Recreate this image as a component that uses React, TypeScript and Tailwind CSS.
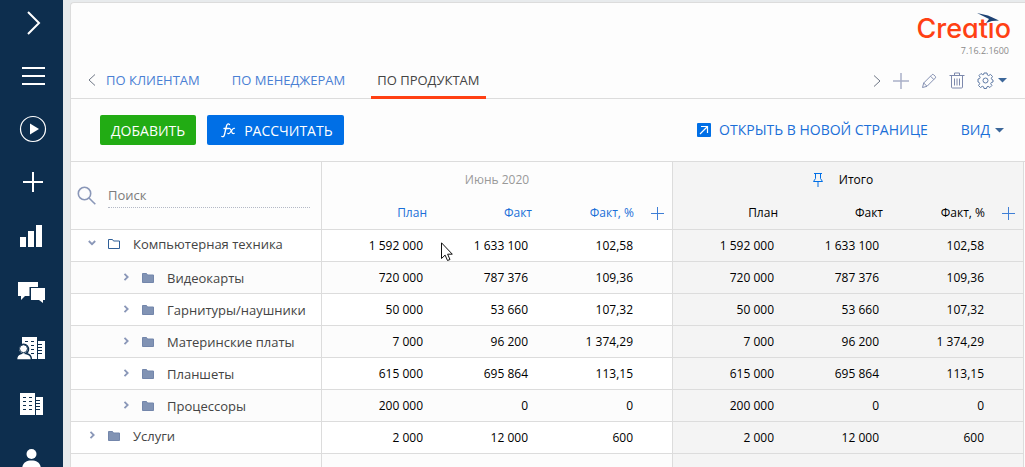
import React from "react";

type Row = { name: string; level: number; open?: boolean; values: string[] };
type NavItem = { label: string; icon: React.ReactNode };

const rows: Row[] = [
  { name: "Компьютерная техника", level: 0, open: true, values: ["1 592 000", "1 633 100", "102,58"] },
  { name: "Видеокарты", level: 1, values: ["720 000", "787 376", "109,36"] },
  { name: "Гарнитуры/наушники", level: 1, values: ["50 000", "53 660", "107,32"] },
  { name: "Материнские платы", level: 1, values: ["7 000", "96 200", "1 374,29"] },
  { name: "Планшеты", level: 1, values: ["615 000", "695 864", "113,15"] },
  { name: "Процессоры", level: 1, values: ["200 000", "0", "0"] },
  { name: "Услуги", level: 0, values: ["2 000", "12 000", "600"] },
];

const actions: NavItem[] = [
  {
    label: "Развернуть панель",
    icon: <path d="M11 5l11 11-11 11" fill="none" stroke="#fff" strokeWidth="2" />,
  },
  {
    label: "Меню",
    icon: <path d="M5 8h23M5 16h23M5 24h23" fill="none" stroke="#fff" strokeWidth="2" />,
  },
  {
    label: "Запустить процесс",
    icon: (
      <>
        <circle cx="16" cy="16" r="12.5" fill="none" stroke="#fff" strokeWidth="1.2" />
        <path d="M13 10.500l9 5.500-9 5.500z" fill="#fff" />
      </>
    ),
  },
  {
    label: "Создать",
    icon: <path d="M6 16h20M16 6v20" fill="none" stroke="#fff" strokeWidth="2" />,
  },
];

const sections: NavItem[] = [
  {
    label: "Аналитика",
    icon: <path d="M3 17h6v10H3zM11 11h6v16h-6zM19 5h6v22h-6z" fill="#fff" />,
  },
  {
    label: "Лента",
    icon: <path d="M1 6h20v5h-8.500v9H8l-4 4v-4H1zM14 12h14v12h-2v3l-4-3h-8z" fill="#fff" />,
  },
  {
    label: "Контакты компаний",
    icon: (
      <>
        <path d="M5 5h15v22H5zM21 9h7v18h-7z" fill="#fff" />
        <path
          d="M8 9.500h3M14 9.500h3M14 13.500h3M14 17.500h3M14 21.500h3M21 12.500h4M21 15.500h4M21 18.500h4M21 21.500h4"
          stroke="#0d2e4e"
        />
        <path
          d="M-.5 28c0-4 2-6 4.500-6.500a5 5 0 1 1 5 0c3 .5 5.500 2.500 5.500 6.500z"
          fill="#fff"
          stroke="#0d2e4e"
          strokeWidth="1.500"
        />
        <circle cx="6.500" cy="16.700" r="4" fill="#fff" stroke="#0d2e4e" />
      </>
    ),
  },
  {
    label: "Контрагенты",
    icon: (
      <>
        <path d="M3 5h15v22H3zM19 9h7v18h-7z" fill="#fff" />
        <path
          d="M6 9.500h3M12 9.500h3M6 13.500h3M12 13.500h3M6 17.500h3M12 17.500h3M6 21.500h3M12 21.500h3M19 12.500h4M19 15.500h4M19 18.500h4M19 21.500h4"
          stroke="#0d2e4e"
        />
      </>
    ),
  },
  {
    label: "Контакты",
    icon: (
      <>
        <circle cx="14.500" cy="10" r="5" fill="#fff" />
        <path d="M5 26c0-7 4-9.500 9.500-9.500S24 19 24 26z" fill="#fff" />
      </>
    ),
  },
];

function NavButton({ item }: { item: NavItem }) {
  return (
    <button aria-label={item.label} className="block h-[31px] shrink-0">
      <svg width="32" height="32" viewBox="0 0 32 32" overflow="visible">
        {item.icon}
      </svg>
    </button>
  );
}

function Sidebar() {
  return (
    <nav aria-label="Разделы" className="flex w-[63px] shrink-0 flex-col items-center gap-[23px] bg-[#0d2e4e] pt-[7px] pl-[3px]">
      <div className="flex flex-col gap-[22px]">
        {actions.map((item) => (
          <NavButton key={item.label} item={item} />
        ))}
      </div>
      <div className="flex flex-col gap-[25px]">
        {sections.map((item) => (
          <NavButton key={item.label} item={item} />
        ))}
      </div>
    </nav>
  );
}

function Logo() {
  return (
    <div className="relative pt-2.5 text-right">
      <div className="font-['Inter'] text-[27px] leading-8 font-medium text-[#ff4013] [font-feature-settings:'cv11']">
        Creatio
      </div>
      <svg className="absolute top-2.5 right-3 h-[10px] w-[22px]" viewBox="0 0 22 10">
        <path d="M0 0l11 2.500L22 7.500 15 8l-6 2 3-4z" fill="#1d4374" />
      </svg>
      <div className="pr-0.5 text-[9px] leading-3 text-[#8a8a8a]">7.16.2.1600</div>
    </div>
  );
}

function Caret() {
  return (
    <svg width="9" height="5" viewBox="0 0 9 5">
      <path d="M0 0h9L4.500 4.500z" fill="#3c679a" />
    </svg>
  );
}

function Tabs() {
  const tab = "h-[38px] border-b-[3px] px-1.5 pt-1 text-[13px]";
  return (
    <div className="flex h-[38px] shrink-0 items-center border-b border-[#dcdcdc] pr-[18px] pl-4">
      <button aria-label="Предыдущие вкладки" className="mr-1">
        <svg width="9" height="14" viewBox="0 0 9 14" fill="none" stroke="#6f7786">
          <path d="M8 1.500L2 7l6 5.500" />
        </svg>
      </button>
      <div role="tablist" className="-mb-px flex gap-5 self-start">
        <button role="tab" aria-selected={false} className={`${tab} border-transparent text-[#4a80d4]`}>
          ПО КЛИЕНТАМ
        </button>
        <button role="tab" aria-selected={false} className={`${tab} border-transparent text-[#4a80d4]`}>
          ПО МЕНЕДЖЕРАМ
        </button>
        <button role="tab" aria-selected className={`${tab} border-[#ff4013] text-[#444]`}>
          ПО ПРОДУКТАМ
        </button>
      </div>
      <div className="ml-auto flex items-center gap-3 pt-0.5">
        <button aria-label="Следующие вкладки">
          <svg width="9" height="14" viewBox="0 0 9 14" fill="none" stroke="#6f7786">
            <path d="M2 1.500l6 5.500-6 5.500" />
          </svg>
        </button>
        <button aria-label="Добавить вкладку">
          <svg width="16" height="16" viewBox="0 0 16 16" stroke="#a9b0c8" strokeWidth="1.500">
            <path d="M0 8h16M8 0v16" />
          </svg>
        </button>
        <button aria-label="Изменить">
          <svg width="16" height="16" viewBox="0 0 16 16" fill="none" stroke="#8490b2">
            <path d="M1.500 14.500l1.200-4.500L11 1.700q.8-.7 1.600 0l1.700 1.700q.7.8 0 1.600L6 13.300zM9.500 3.200l3.300 3.300M2.700 10l3.300 3.300" />
          </svg>
        </button>
        <button aria-label="Удалить">
          <svg width="16" height="17" viewBox="0 0 16 17" fill="none" stroke="#7c88ac">
            <path d="M.5 3.500h15M5.500 3V1h5v2M2.500 4v11q0 1 1 1h9q1 0 1-1V4M5.500 6.500v7M8 6.500v7M10.500 6.500v7" />
          </svg>
        </button>
        <button aria-label="Настройки" className="flex items-center gap-1">
          <svg width="17" height="17" viewBox="0 0 17 17" fill="none" stroke="#5f7aa5">
            <path
              strokeLinejoin="round"
              d="M7 1h3l.4 2 1.300.600 1.800-1.200 2 2.100-1.200 1.800.5 1.200L16 8v2l-1.700.5-.6 1.200 1.200 1.800-2 2-1.800-1.200-1.200.6-.4 1.600H7l-.4-1.700-1.300-.5-1.800 1.200-2-2 1.200-1.800-.6-1.300L1 10V7l1.600-.4.6-1.300L2 3.500l2-2 1.700 1.200L6.600 2.600z"
            />
            <circle cx="8.500" cy="8.500" r="2.500" />
          </svg>
          <Caret />
        </button>
      </div>
    </div>
  );
}

function Toolbar() {
  return (
    <div className="flex h-[63px] shrink-0 items-center gap-[11px] border-b border-[#dcdcdc] pr-[21px] pl-[29px] text-sm">
      <button className="h-[30px] rounded-xs bg-[#22ac14] px-[11px] pt-0.5 text-white">ДОБАВИТЬ</button>
      <button className="flex h-[30px] items-center gap-2 rounded-xs bg-[#006fe6] px-[11px] pt-0.5 text-white">
        <span aria-hidden="true" className="flex w-[18px] justify-end pb-0.5">
          <svg width="15" height="15" viewBox="0 0 15 15" fill="none" stroke="#fff" strokeLinecap="round">
            <path d="M8.500 1.500Q6.500-.3 5.500 3L3.500 11.500Q2.800 14.300.8 13.500M3 5.500h4.500" strokeWidth="1.300" />
            <path d="M7.500 5.500q1.500-.6 2.200 1l1.300 3q.7 1.700 2.300.8M13.500 5.300q-1-.3-2 1L8.800 9.800q-1 1.200-2 .7" strokeWidth="1.200" />
          </svg>
        </span>
        РАССЧИТАТЬ
      </button>
      <a href="#page" className="ml-auto flex items-center gap-2 text-[#1b6fd8]">
        <svg width="14" height="14" viewBox="0 0 14 14">
          <rect width="14" height="14" rx="1" fill="#006fe6" />
          <path d="M3 11l7.500-7.500M4 3.500h6.500V10" stroke="#fff" fill="none" strokeWidth="1.200" />
        </svg>
        ОТКРЫТЬ В НОВОЙ СТРАНИЦЕ
      </a>
      <button className="ml-[22px] flex items-center gap-[5px] text-[#1b6fd8]">
        ВИД
        <Caret />
      </button>
    </div>
  );
}

function AddColumn() {
  return (
    <button aria-label="Добавить колонку" className="block">
      <svg width="13" height="13" viewBox="0 0 13 13" stroke="#3f7fd6">
        <path d="M0 6.500h13M6.500 0v13" />
      </svg>
    </button>
  );
}

function Folder({ open }: { open?: boolean }) {
  return (
    <svg width="12" height="10" viewBox="0 0 12 10">
      <path
        d="M.5.500h4l1 1.500h6v7.500H.5z"
        fill={open ? "#fff" : "#8193b4"}
        stroke={open ? "#2f5f98" : "#7386ab"}
      />
    </svg>
  );
}

function Chevron({ open }: { open?: boolean }) {
  return (
    <svg width="8" height="8" viewBox="0 0 8 8" fill="none" stroke="#8a97b8" strokeWidth="1.800">
      <path d={open ? "M.8 2L4 5.200 7.200 2" : "M2.500 .8L5.700 4 2.500 7.200"} />
    </svg>
  );
}

const line = "border-b border-[#dcdcdc]";
const edge = "border-r border-[#dcdcdc]";

function SubHeaders({ total }: { total?: boolean }) {
  const tone = total ? "bg-[#f4f4f4] font-medium text-black" : "font-normal text-[#1b6fd8]";
  return (
    <>
      <th scope="col" className={`${line} ${tone} pr-[5px] text-right`}>План</th>
      <th scope="col" className={`${line} ${tone} pr-[5px] text-right`}>Факт</th>
      <th scope="col" className={`${line} ${tone} pr-2 text-right`}>Факт, %</th>
      <td className={`${line} ${edge} ${tone} pl-[9px]`}>
        <AddColumn />
      </td>
    </>
  );
}

function ValueCells({ values, total }: { values: string[]; total?: boolean }) {
  const tone = total ? "bg-[#f4f4f4]" : "";
  return (
    <>
      {values.map((v, i) => (
        <td key={i} className={`${line} ${tone} pt-px pr-[9px] text-right font-medium text-black`}>
          {v}
        </td>
      ))}
      <td className={`${line} ${edge} ${tone}`} />
    </>
  );
}

function PlanTable() {
  return (
    <div className="pr-px">
      <table className="w-full table-fixed border-separate border-spacing-0 text-xs">
        <colgroup>
          <col className="w-[251px]" />
          <col className="w-[110px]" />
          <col className="w-[105px]" />
          <col className="w-[105px]" />
          <col className="w-[31px]" />
          <col className="w-[110px]" />
          <col className="w-[105px]" />
          <col className="w-[105px]" />
          <col className="w-[31px]" />
        </colgroup>
        <thead>
          <tr className="h-[35px]">
            <th rowSpan={2} className={`${line} ${edge} pr-[11px] pl-1.5 text-left font-normal`}>
              <label className="flex items-center gap-3">
                <svg width="19" height="19" viewBox="0 0 19 19" fill="none" stroke="#8a97b8" strokeWidth="1.600">
                  <circle cx="7.500" cy="7.500" r="6.200" />
                  <path d="M12 12l6.300 6.300" />
                </svg>
                <input
                  type="search"
                  placeholder="Поиск"
                  aria-label="Поиск"
                  className="h-6 min-w-0 flex-1 border-b border-dotted border-[#b4b9c6] text-[13px] outline-none placeholder:text-[#7c7c7c]"
                />
              </label>
            </th>
            <th colSpan={4} scope="colgroup" className={`${edge} font-normal text-[#999]`}>
              Июнь 2020
            </th>
            <th colSpan={4} scope="colgroup" className={`${edge} bg-[#f4f4f4] font-medium text-black`}>
              <span className="flex items-center justify-center gap-4 pr-2.5">
                <svg width="10" height="14" viewBox="0 0 10 14" fill="none" stroke="#006fe6">
                  <path d="M1 .5h8M2.500.500v5L.5 8.500h9L7.500 5.500v-5M5 8.500V14" />
                </svg>
                Итого
              </span>
            </th>
          </tr>
          <tr className="h-[33px]">
            <SubHeaders />
            <SubHeaders total />
          </tr>
        </thead>
        <tbody>
          {rows.map((row) => (
            <tr key={row.name} className="h-8 odd:bg-white even:bg-[#fcfcfc]">
              <th scope="row" className={`${line} ${edge} text-left text-[13px] font-normal text-[#444]`}>
                <div className={`flex items-center ${row.level ? "pt-0.5 pl-[51px]" : "pb-0.5 pl-[17px]"}`}>
                  <button aria-label={row.open ? "Свернуть" : "Развернуть"} className="mr-3 pb-0.5">
                    <Chevron open={row.open} />
                  </button>
                  <Folder open={row.open} />
                  <span className="ml-[13px]">{row.name}</span>
                </div>
              </th>
              <ValueCells values={row.values} />
              <ValueCells values={row.values} total />
            </tr>
          ))}
          <tr className="h-8 bg-[#fcfcfc]">
            <td className={`${line} ${edge}`} />
            <ValueCells values={["", "", ""]} />
            <ValueCells values={["", "", ""]} total />
          </tr>
        </tbody>
      </table>
    </div>
  );
}

function Cursor() {
  return (
    <svg className="pointer-events-none absolute top-[242px] left-[441px]" width="12" height="20" viewBox="0 0 12 20">
      <path d="M.5.800v15.700l3.600-3.400 2.400 5.400 2.500-1-2.400-5.300h4.700z" fill="#fff" stroke="#111" />
    </svg>
  );
}

export default function App() {
  return (
    <div className="relative flex h-screen overflow-hidden bg-[#e8ebed] font-['Open_Sans',sans-serif]">
      <Sidebar />
      <main className="mt-0.5 ml-[7px] flex min-w-0 flex-1 flex-col rounded-tl border-t border-l border-[#dcdcdc] bg-[#fdfdfd]">
        <header className="flex h-[58px] shrink-0 justify-end pr-3.5">
          <Logo />
        </header>
        <Tabs />
        <Toolbar />
        <PlanTable />
      </main>
      <Cursor />
    </div>
  );
}
